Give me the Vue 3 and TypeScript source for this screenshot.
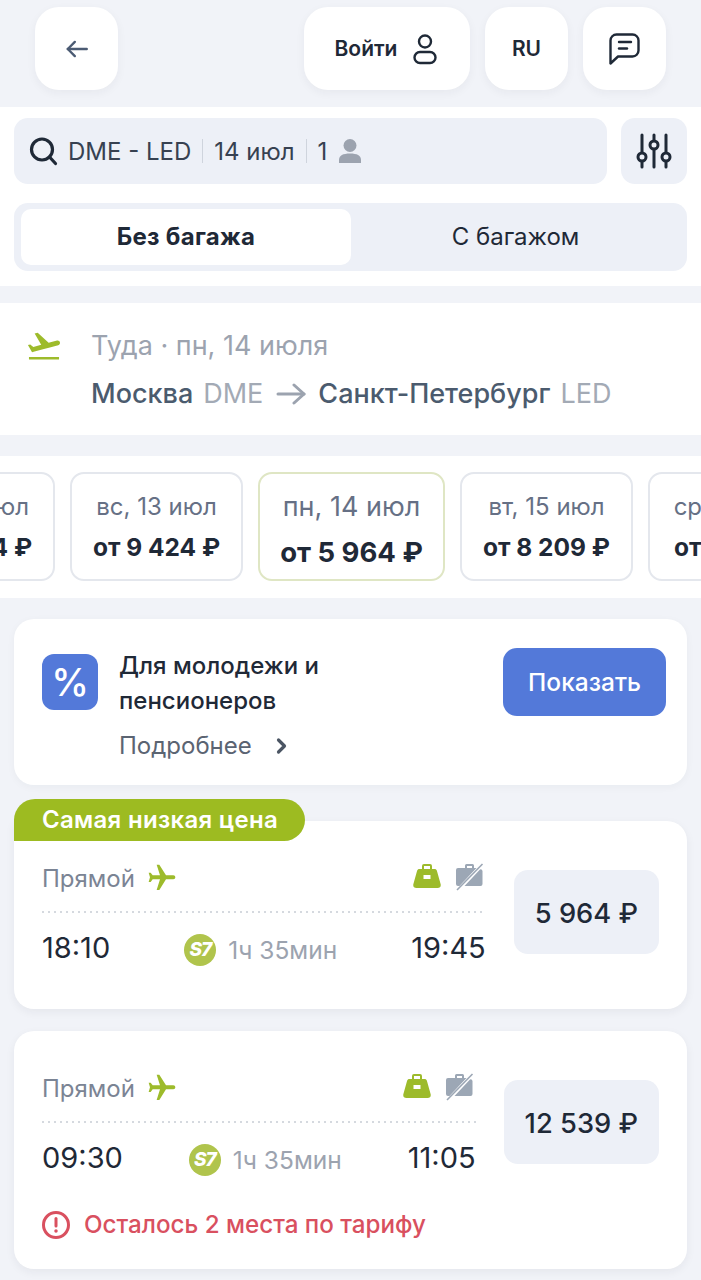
<script setup lang="ts">
// Dates strip and flight results
const dates = [
  { id: 1, day: 'сб, 12 июл', price: 'от 6 424 ₽', active: false },
  { id: 2, day: 'вс, 13 июл', price: 'от 9 424 ₽', active: false },
  { id: 3, day: 'пн, 14 июл', price: 'от 5 964 ₽', active: true },
  { id: 4, day: 'вт, 15 июл', price: 'от 8 209 ₽', active: false },
  { id: 5, day: 'ср, 16 июл', price: 'от 7 100 ₽', active: false },
]

const flights = [
  { id: 1, from: '18:10', to: '19:45', duration: '1ч 35мин', price: '5 964 ₽', cheapest: true, warning: '' },
  { id: 2, from: '09:30', to: '11:05', duration: '1ч 35мин', price: '12 539 ₽', cheapest: false, warning: 'Осталось 2 места по тарифу' },
]
</script>

<template>
  <div class="page">
    <!-- Top bar -->
    <header class="topbar">
      <button class="top-btn back" aria-label="Назад">
        <svg width="26" height="26" viewBox="0 0 24 24" fill="none" stroke="#4b5b73" stroke-width="2.2" stroke-linecap="round" stroke-linejoin="round"><path d="M21 12H3.500"/><path d="M10 5.500 3.500 12l6.500 6.500"/></svg>
      </button>
      <div class="top-right">
        <button class="top-btn login">
          <span>Войти</span>
          <svg width="28" height="32" viewBox="0 0 28 32" fill="none" stroke="#1f2937" stroke-width="2.4"><circle cx="14" cy="8.500" r="6"/><rect x="3.500" y="19" width="21" height="11" rx="5.500"/></svg>
        </button>
        <button class="top-btn lang">RU</button>
        <button class="top-btn chat" aria-label="Чат">
          <svg width="34" height="34" viewBox="0 0 34 34" fill="none" stroke="#1f2937" stroke-width="2.4" stroke-linecap="round" stroke-linejoin="round"><path d="M2.500 8.500a6 6 0 0 1 6-6h16a6 6 0 0 1 6 6v10a6 6 0 0 1-6 6H10l-7.500 7z"/><path d="M11 10h12"/><path d="M11 16.500h8"/></svg>
        </button>
      </div>
    </header>

    <!-- Search -->
    <section class="search-section">
      <div class="search-row">
        <div class="search-box">
          <svg class="search-icon" width="30" height="30" viewBox="0 0 30 30" fill="none" stroke="#1f2937" stroke-width="3.200" stroke-linecap="round"><circle cx="14" cy="13.500" r="10.500"/><path d="m21.500 21 6 6.500"/></svg>
          <span>DME - LED</span>
          <i class="sep"></i>
          <span>14 июл</span>
          <i class="sep"></i>
          <span>1</span>
          <svg width="24" height="26" viewBox="0 0 24 26" fill="#9ca3af"><circle cx="12" cy="7.500" r="6.500"/><path d="M1 25v-3c0-4.500 4-6.500 11-6.500s11 2 11 6.500v3z"/></svg>
        </div>
        <button class="filter-btn" aria-label="Фильтры">
          <svg width="36" height="36" viewBox="0 0 36 36" fill="none" stroke="#1f2937" stroke-width="3" stroke-linecap="round"><path d="M6 2v17M6 29v5M18 2v5M18 17v17M30 2v17M30 29v5"/><circle cx="6" cy="24" r="4"/><circle cx="18" cy="12" r="4"/><circle cx="30" cy="24" r="4"/></svg>
        </button>
      </div>
      <div class="tabs">
        <div class="tab active">Без багажа</div>
        <div class="tab">С багажом</div>
      </div>
    </section>

    <!-- Route -->
    <section class="route">
      <svg class="takeoff" width="38" height="38" viewBox="0 0 24 24" fill="#9dbb2b"><path d="M2.500 19h19v1.500h-19zm19.570-9.360c-.21-.8-1.040-1.280-1.840-1.060L14.920 10l-6.900-6.430-1.930.51 4.140 7.170-4.970 1.330-1.970-1.540-1.450.39 1.820 3.160.77 1.330 1.600-.43 5.310-1.420 4.350-1.160L21 11.490c.81-.23 1.280-1.050 1.070-1.850z"/></svg>
      <div>
        <p class="route-date">Туда · пн, 14 июля</p>
        <p class="route-line">
          <b>Москва</b> <span class="code">DME</span>
          <svg class="route-arrow" width="30" height="24" viewBox="0 0 30 24" fill="none" stroke="#9ca3af" stroke-width="3" stroke-linecap="round" stroke-linejoin="round"><path d="M2 12h26"/><path d="M18 3l10 9-10 9"/></svg>
          <b>Санкт-Петербург</b> <span class="code">LED</span>
        </p>
      </div>
    </section>

    <!-- Dates -->
    <section class="dates">
      <div v-for="d in dates" :key="d.id" class="date-chip" :class="{ active: d.active }">
        <span class="date-day">{{ d.day }}</span>
        <span class="date-price">{{ d.price }}</span>
      </div>
    </section>

    <!-- Promo -->
    <section class="promo">
      <div class="promo-icon">%</div>
      <div class="promo-text">
        <p class="promo-title">Для молодежи и пенсионеров</p>
        <p class="promo-more">
          Подробнее
          <svg width="14" height="18" viewBox="0 0 14 18" fill="none" stroke="#4b5563" stroke-width="3.200" stroke-linecap="round" stroke-linejoin="round"><path d="m3.500 3 6 6-6 6"/></svg>
        </p>
      </div>
      <button class="promo-btn">Показать</button>
    </section>

    <!-- Flights -->
    <div class="flights">
      <article v-for="f in flights" :key="f.id" class="flight" :class="{ cheapest: f.cheapest }">
        <div v-if="f.cheapest" class="badge">Самая низкая цена</div>
        <div class="flight-main">
          <div class="flight-head">
            <span class="direct">Прямой</span>
            <svg class="plane" width="32" height="32" viewBox="0 0 24 24" fill="#9dbb2b"><path transform="rotate(90 12 12)" d="M21 16v-2l-8-5V3.500c0-.83-.67-1.500-1.500-1.500S10 2.670 10 3.500V9l-8 5v2l8-2.500V19l-2 1.500V22l3.500-1 3.500 1v-1.500L13 19v-5.500l8 2.500z"/></svg>
            <span class="bags">
              <svg width="28" height="26" viewBox="0 0 28 26" fill="#9dbb2b"><path fill-rule="evenodd" d="M9 6V3a2 2 0 0 1 2-2h6a2 2 0 0 1 2 2v3h2.500c1.200 0 2 .6 2.400 1.700L27.600 21c.6 2.500-.6 4-3 4H3.400c-2.400 0-3.600-1.500-3-4L4.100 7.700C4.500 6.600 5.300 6 6.500 6zm2 0h6V3h-6zm-.5 6v4h7v-4z"/></svg>
              <svg width="29" height="29" viewBox="0 0 29 29" fill="#9ca7b5"><path d="M10 6V3.500A1.500 1.500 0 0 1 11.500 2h6A1.500 1.500 0 0 1 19 3.500V6h2.500l-17 18H3a2 2 0 0 1-2-2V8a2 2 0 0 1 2-2zm2 0h5V4h-5zM25 7.500A2 2 0 0 1 27.500 9v13a2 2 0 0 1-2 2H9.500z"/><path d="M2 28 27.500 2" stroke="#9ca7b5" stroke-width="1.600"/></svg>
            </span>
          </div>
          <div class="dots"></div>
          <div class="times">
            <span class="time">{{ f.from }}</span>
            <span class="mid">
              <span class="s7">S7</span>
              <span class="duration">{{ f.duration }}</span>
            </span>
            <span class="time">{{ f.to }}</span>
          </div>
          <div v-if="f.warning" class="warning">
            <svg width="28" height="28" viewBox="0 0 28 28" fill="none" stroke="#d9505f" stroke-width="3"><circle cx="14" cy="14" r="12.500"/><path d="M14 7.500v7.500" stroke-linecap="round"/><circle cx="14" cy="20" r="1" fill="#d9505f" stroke-width="1.500"/></svg>
            <span>{{ f.warning }}</span>
          </div>
        </div>
        <div class="price-box">{{ f.price }}</div>
      </article>
    </div>
  </div>
</template>

<style>
html, body { background: #f1f3f8; }
</style>

<style scoped>
.page {
  width: 701px;
  height: 1280px;
  overflow: hidden;
  background: #f1f3f8;
  font-family: Inter, "Noto Sans", sans-serif;
  color: #1f2937;
}

p { margin: 0; }
button { font-family: inherit; border: none; cursor: pointer; }

/* Top bar */
.topbar {
  height: 107px;
  box-sizing: border-box;
  padding: 7px 35px 0;
  display: flex;
  justify-content: space-between;
}

.top-right { display: flex; gap: 15px; }

.top-btn {
  height: 83px;
  width: 83px;
  padding: 0;
  background: #fff;
  border-radius: 24px;
  box-shadow: 0 3px 10px rgba(31, 41, 55, 0.05);
  display: flex;
  align-items: center;
  justify-content: center;
  font-size: 21px;
  font-weight: 600;
  color: #1f2937;
}

.top-btn.login { width: 166px; gap: 14px; }

/* Search */
.search-section {
  background: #fff;
  height: 179px;
  box-sizing: border-box;
  padding: 11px 14px 0;
}

.search-row { display: flex; gap: 14px; }

.search-box {
  flex: 1;
  height: 66px;
  box-sizing: border-box;
  padding-left: 14px;
  background: #edf0f7;
  border-radius: 14px;
  display: flex;
  align-items: center;
  gap: 11px;
  font-size: 24px;
  color: #374151;
}

.search-icon { margin-right: -1px; }

.sep {
  width: 1px;
  height: 24px;
  background: #cfd4dd;
}

.filter-btn {
  width: 66px;
  height: 66px;
  padding: 0;
  background: #edf0f7;
  border-radius: 14px;
  display: flex;
  align-items: center;
  justify-content: center;
}

.tabs {
  margin-top: 19px;
  height: 68px;
  box-sizing: border-box;
  padding: 6px 7px;
  background: #edf0f7;
  border-radius: 14px;
  display: flex;
}

.tab {
  flex: 1;
  border-radius: 10px;
  display: flex;
  align-items: center;
  justify-content: center;
  padding-bottom: 2px;
  font-size: 24px;
  color: #1f2937;
}

.tab.active {
  background: #fff;
  font-weight: 700;
  letter-spacing: 0.3px;
  flex: 0 0 330px;
}

/* Route */
.route {
  margin-top: 17px;
  height: 132px;
  box-sizing: border-box;
  padding: 25px 0 0 25px;
  background: #fff;
  display: flex;
  gap: 28px;
}

.takeoff { margin-top: -1px; }

.route-date {
  font-size: 27px;
  line-height: 36px;
  color: #9ca3af;
}

.route-line {
  margin-top: 12px;
  display: flex;
  align-items: center;
  gap: 10px;
  font-size: 27px;
  line-height: 36px;
  white-space: nowrap;
}

.route-line b { font-weight: 500; color: #4b5b6e; }
.route-line .code { color: #a3aab5; }
.route-arrow { margin: 0 2px 0 3px; }

/* Dates */
.dates {
  margin-top: 21px;
  height: 142px;
  box-sizing: border-box;
  padding-top: 16px;
  background: #fff;
  display: flex;
  gap: 15px;
  overflow: hidden;
}

.date-chip {
  flex: 0 0 173px;
  height: 109px;
  box-sizing: border-box;
  border: 2px solid #e4e7ed;
  border-radius: 14px;
  display: flex;
  flex-direction: column;
  align-items: center;
  justify-content: center;
  gap: 10px;
  background: #fff;
}

.date-chip:first-child { margin-left: -118px; }

.date-chip.active {
  flex-basis: 187px;
  border-color: #dfe6c4;
  gap: 15px;
  padding-top: 6px;
}

.date-day {
  font-size: 24px;
  line-height: 30px;
  color: #667085;
}

.date-price {
  font-size: 24.500px;
  line-height: 30px;
  font-weight: 700;
  color: #1f2937;
  white-space: nowrap;
}

.active .date-day { font-size: 27px; }
.active .date-price { font-size: 27.500px; }

/* Promo */
.promo {
  margin: 21px 14px 0;
  height: 166px;
  box-sizing: border-box;
  padding: 29px 21px 0 28px;
  background: #fff;
  border-radius: 20px;
  box-shadow: 0 2px 8px rgba(31, 41, 55, 0.04);
  display: flex;
  align-items: flex-start;
}

.promo-icon {
  flex: 0 0 56px;
  height: 56px;
  margin-top: 6px;
  border-radius: 12px;
  background: #5379d9;
  color: #fff;
  font-size: 38px;
  font-weight: 500;
  line-height: 56px;
  text-align: center;
}

.promo-text {
  margin-left: 21px;
  flex: 1;
}

.promo-title {
  width: 240px;
  font-size: 24px;
  line-height: 35px;
  font-weight: 500;
  color: #1f2937;
}

.promo-more {
  margin-top: 13px;
  display: flex;
  align-items: center;
  gap: 23px;
  font-size: 24px;
  line-height: 30px;
  color: #5b6472;
}

.promo-btn {
  width: 163px;
  height: 68px;
  padding: 0;
  background: #5379d9;
  border-radius: 14px;
  color: #fff;
  font-size: 24.500px;
  font-weight: 500;
}

/* Flights */
.flights {
  margin: 36px 14px 0;
  display: flex;
  flex-direction: column;
  gap: 22px;
}

.flight {
  position: relative;
  min-height: 188px;
  box-sizing: border-box;
  padding: 39px 28px 30px;
  background: #fff;
  border-radius: 20px;
  box-shadow: 0 3px 10px rgba(31, 41, 55, 0.06);
  display: flex;
  align-items: flex-start;
  gap: 28px;
}

.flight.cheapest { border-top-left-radius: 0; }

.badge {
  position: absolute;
  left: 0;
  top: -22px;
  width: 291px;
  height: 42px;
  box-sizing: border-box;
  padding-left: 28px;
  background: #9dbb21;
  border-radius: 22px 22px 22px 0;
  color: #fff;
  font-size: 24px;
  font-weight: 600;
  letter-spacing: 0.3px;
  line-height: 42px;
  white-space: nowrap;
}

.flight-main { flex: 1; min-width: 0; }

.flight-head {
  display: flex;
  align-items: center;
  height: 36px;
}

.direct {
  font-size: 24px;
  color: #7b8494;
}

.plane { margin-left: 11px; }

.bags {
  margin-left: auto;
  display: flex;
  align-items: center;
  gap: 14px;
  margin-top: -4px;
  margin-right: 2px;
}

.dots {
  margin-top: 15px;
  height: 2px;
  background-image: linear-gradient(to right, #d5d9df 2px, transparent 2px);
  background-size: 6px 2px;
}

.times {
  margin-top: 17px;
  display: flex;
  align-items: center;
  justify-content: space-between;
}

.time {
  font-size: 29px;
  line-height: 34px;
  color: #1f2937;
}

.mid {
  display: flex;
  align-items: center;
  gap: 12px;
  padding-top: 4px;
}

.s7 {
  width: 32px;
  height: 32px;
  border-radius: 50%;
  background: #b0c44c;
  color: #fff;
  font-size: 19px;
  font-weight: 800;
  font-style: italic;
  line-height: 32px;
  text-align: center;
  letter-spacing: -1px;
}

.duration {
  font-size: 24.500px;
  color: #9ca3af;
  white-space: nowrap;
}

.warning {
  margin-top: 34px;
  display: flex;
  align-items: center;
  gap: 14px;
  font-size: 24.200px;
  font-weight: 500;
  color: #d9505f;
  white-space: nowrap;
}

.price-box {
  margin-top: 10px;
  height: 84px;
  box-sizing: border-box;
  padding: 3px 21px 0;
  background: #edf0f7;
  border-radius: 14px;
  display: flex;
  align-items: center;
  font-size: 27.300px;
  font-weight: 500;
  color: #1f2937;
  white-space: nowrap;
}
</style>
